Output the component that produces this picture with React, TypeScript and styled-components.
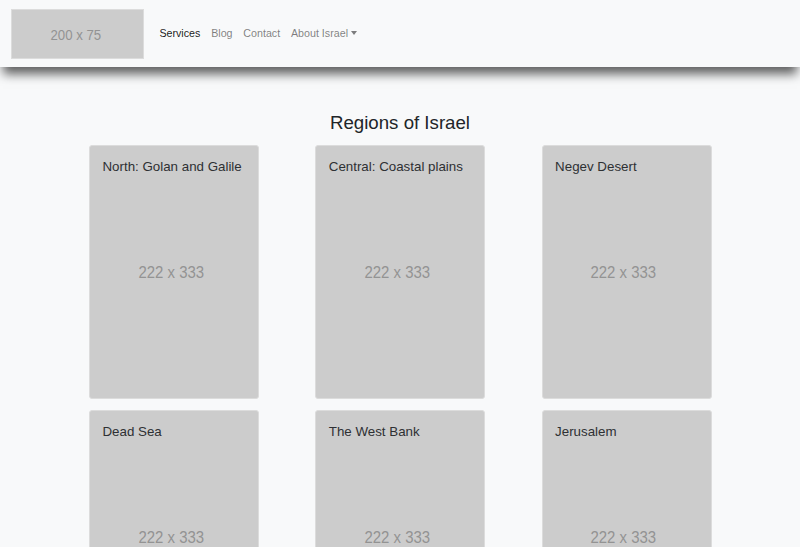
import React from "react";
import styled, { createGlobalStyle } from "styled-components";

const Global = createGlobalStyle`
  html, body { margin: 0; padding: 0; background: #f8f9fa; }
  body { font-family: "Liberation Sans", Arial, sans-serif; color: #212529; }
  * { box-sizing: border-box; }
`;

const NavBar = styled.nav`
  display: flex;
  align-items: center;
  height: 67px;
  padding: 0 11px;
  background: #f8f9fa;
  box-shadow: 0 10px 10px -3px rgba(0, 0, 0, 0.62);
  position: relative;
  z-index: 1;
`;

const Placeholder = styled.div<{ $w: number; $h: number; $fs: number }>`
  width: ${(p) => p.$w}px;
  height: ${(p) => p.$h}px;
  background: #cccccc;
  border: 1px solid #dcdcdc;
  border-radius: ${(p) => (p.$w > 150 ? 3 : 0)}px;
  display: flex;
  align-items: center;
  justify-content: center;
  color: #939393;
  font-size: ${(p) => p.$fs}px;
  position: relative;
`;

const PhText = styled.span<{ $shift: number }>`
  display: inline-block;
  transform: translate(${(p) => p.$shift}px, 1px) scaleX(0.88);
  white-space: nowrap;
`;

const Brand = styled.div`
  margin-right: 10px;
  display: flex;
`;

const NavList = styled.ul`
  display: flex;
  list-style: none;
  margin: 0;
  padding: 0;
  margin-top: -1px;
`;

const NavLink = styled.a<{ $active?: boolean }>`
  display: flex;
  align-items: center;
  padding: 5px 5.4px;
  font-size: 10.7px;
  color: ${(p) => (p.$active ? "rgba(0,0,0,0.9)" : "rgba(0,0,0,0.5)")};
  text-decoration: none;
`;

const Caret = styled.span`
  display: inline-block;
  margin-left: 3px;
  width: 0;
  height: 0;
  border-top: 4px solid rgba(0, 0, 0, 0.5);
  border-left: 3.5px solid transparent;
  border-right: 3.5px solid transparent;
  margin-top: -1px;
`;

const Main = styled.main`
  display: flex;
  flex-direction: column;
  align-items: center;
  padding-top: 45px;
`;

const Title = styled.h3`
  margin: 0 0 10.5px;
  font-size: 18.67px;
  font-weight: 400;
  line-height: 1.2;
  color: #212529;
`;

const Grid = styled.div`
  display: grid;
  width: 680px;
  grid-template-columns: repeat(3, 1fr);
  justify-items: center;
  row-gap: 11px;
  padding-left: 1px;
`;

const CardTitle = styled.h5`
  position: absolute;
  top: 13.3px;
  left: 12.3px;
  margin: 0;
  font-size: 13.33px;
  font-weight: 400;
  line-height: 1.2;
  color: #2e3033;
`;

const regions = [
  "North: Golan and Galile",
  "Central: Coastal plains",
  "Negev Desert",
  "Dead Sea",
  "The West Bank",
  "Jerusalem",
];

export default function App() {
  return (
    <>
      <Global />
      <NavBar>
        <Brand>
          <Placeholder $w={133} $h={50} $fs={15}>
            <PhText $shift={-2}>200 x 75</PhText>
          </Placeholder>
        </Brand>
        <NavList>
          <li><NavLink $active href="#">Services</NavLink></li>
          <li><NavLink href="#">Blog</NavLink></li>
          <li><NavLink href="#">Contact</NavLink></li>
          <li><NavLink href="#">About Israel<Caret /></NavLink></li>
        </NavList>
      </NavBar>
      <Main>
        <Title>Regions of Israel</Title>
        <Grid>
          {regions.map((r) => (
            <Placeholder key={r} $w={170} $h={254} $fs={17}>
              <PhText $shift={-3}>222 x 333</PhText>
              <CardTitle>{r}</CardTitle>
            </Placeholder>
          ))}
        </Grid>
      </Main>
    </>
  );
}
